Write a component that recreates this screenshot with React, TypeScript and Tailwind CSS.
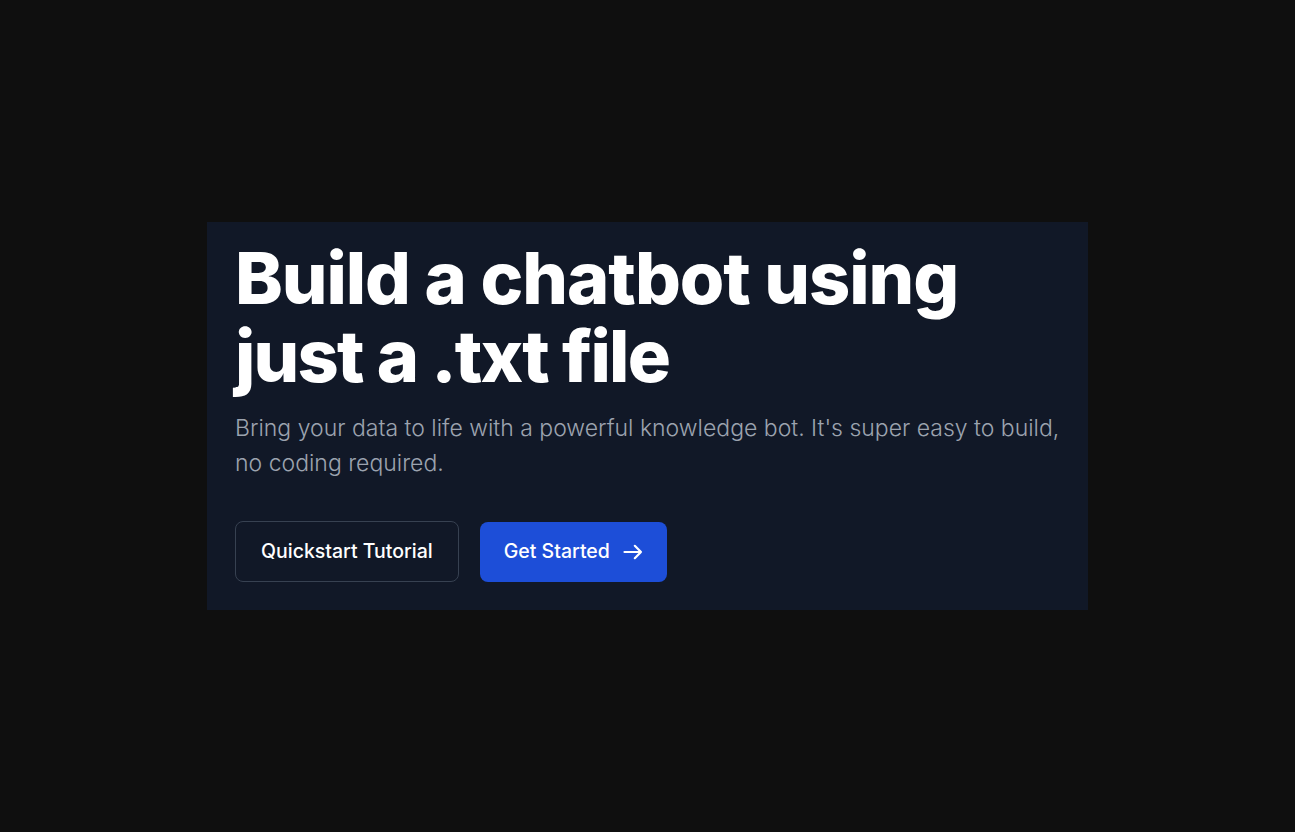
export default function App() {
  return (
    <main
      className="min-h-screen bg-[#0f0f0f] flex items-center justify-center"
      style={{ fontFamily: "Inter, 'Noto Sans', sans-serif" }}
    >
      <section className="w-[881px] bg-[#111827] pl-7 pr-4 pt-[17px] pb-7">
        <h1 className="text-[72px] leading-[78px] font-extrabold tracking-[-0.015em] text-white">
          Build a chatbot using
          <br />
          <span className="tracking-[-0.025em]">just a .txt file</span>
        </h1>
        <p className="mt-4 text-[23px] leading-[35px] font-light text-[#9ca3af]">
          Bring your data to life with a powerful knowledge bot. It's super easy to build,
          no coding required.
        </p>
        <div className="mt-10 flex items-center gap-[21px]">
          <button className="h-[61px] px-[25px] rounded-lg border border-[#374151] text-[19.5px] font-medium text-white">
            Quickstart Tutorial
          </button>
          <button className="h-[60px] pl-6 pr-6 rounded-lg bg-[#1d4ed8] text-[19.5px] font-medium text-white flex items-center gap-[13px]">
            Get Started
            <svg
              width="20"
              height="16"
              viewBox="0 0 20 16"
              fill="none"
              stroke="currentColor"
              strokeWidth="2.2"
              strokeLinecap="round"
              strokeLinejoin="round"
            >
              <path d="M1.5 8h16.5M11.8 1.8 18 8l-6.2 6.2" />
            </svg>
          </button>
        </div>
      </section>
    </main>
  );
}
